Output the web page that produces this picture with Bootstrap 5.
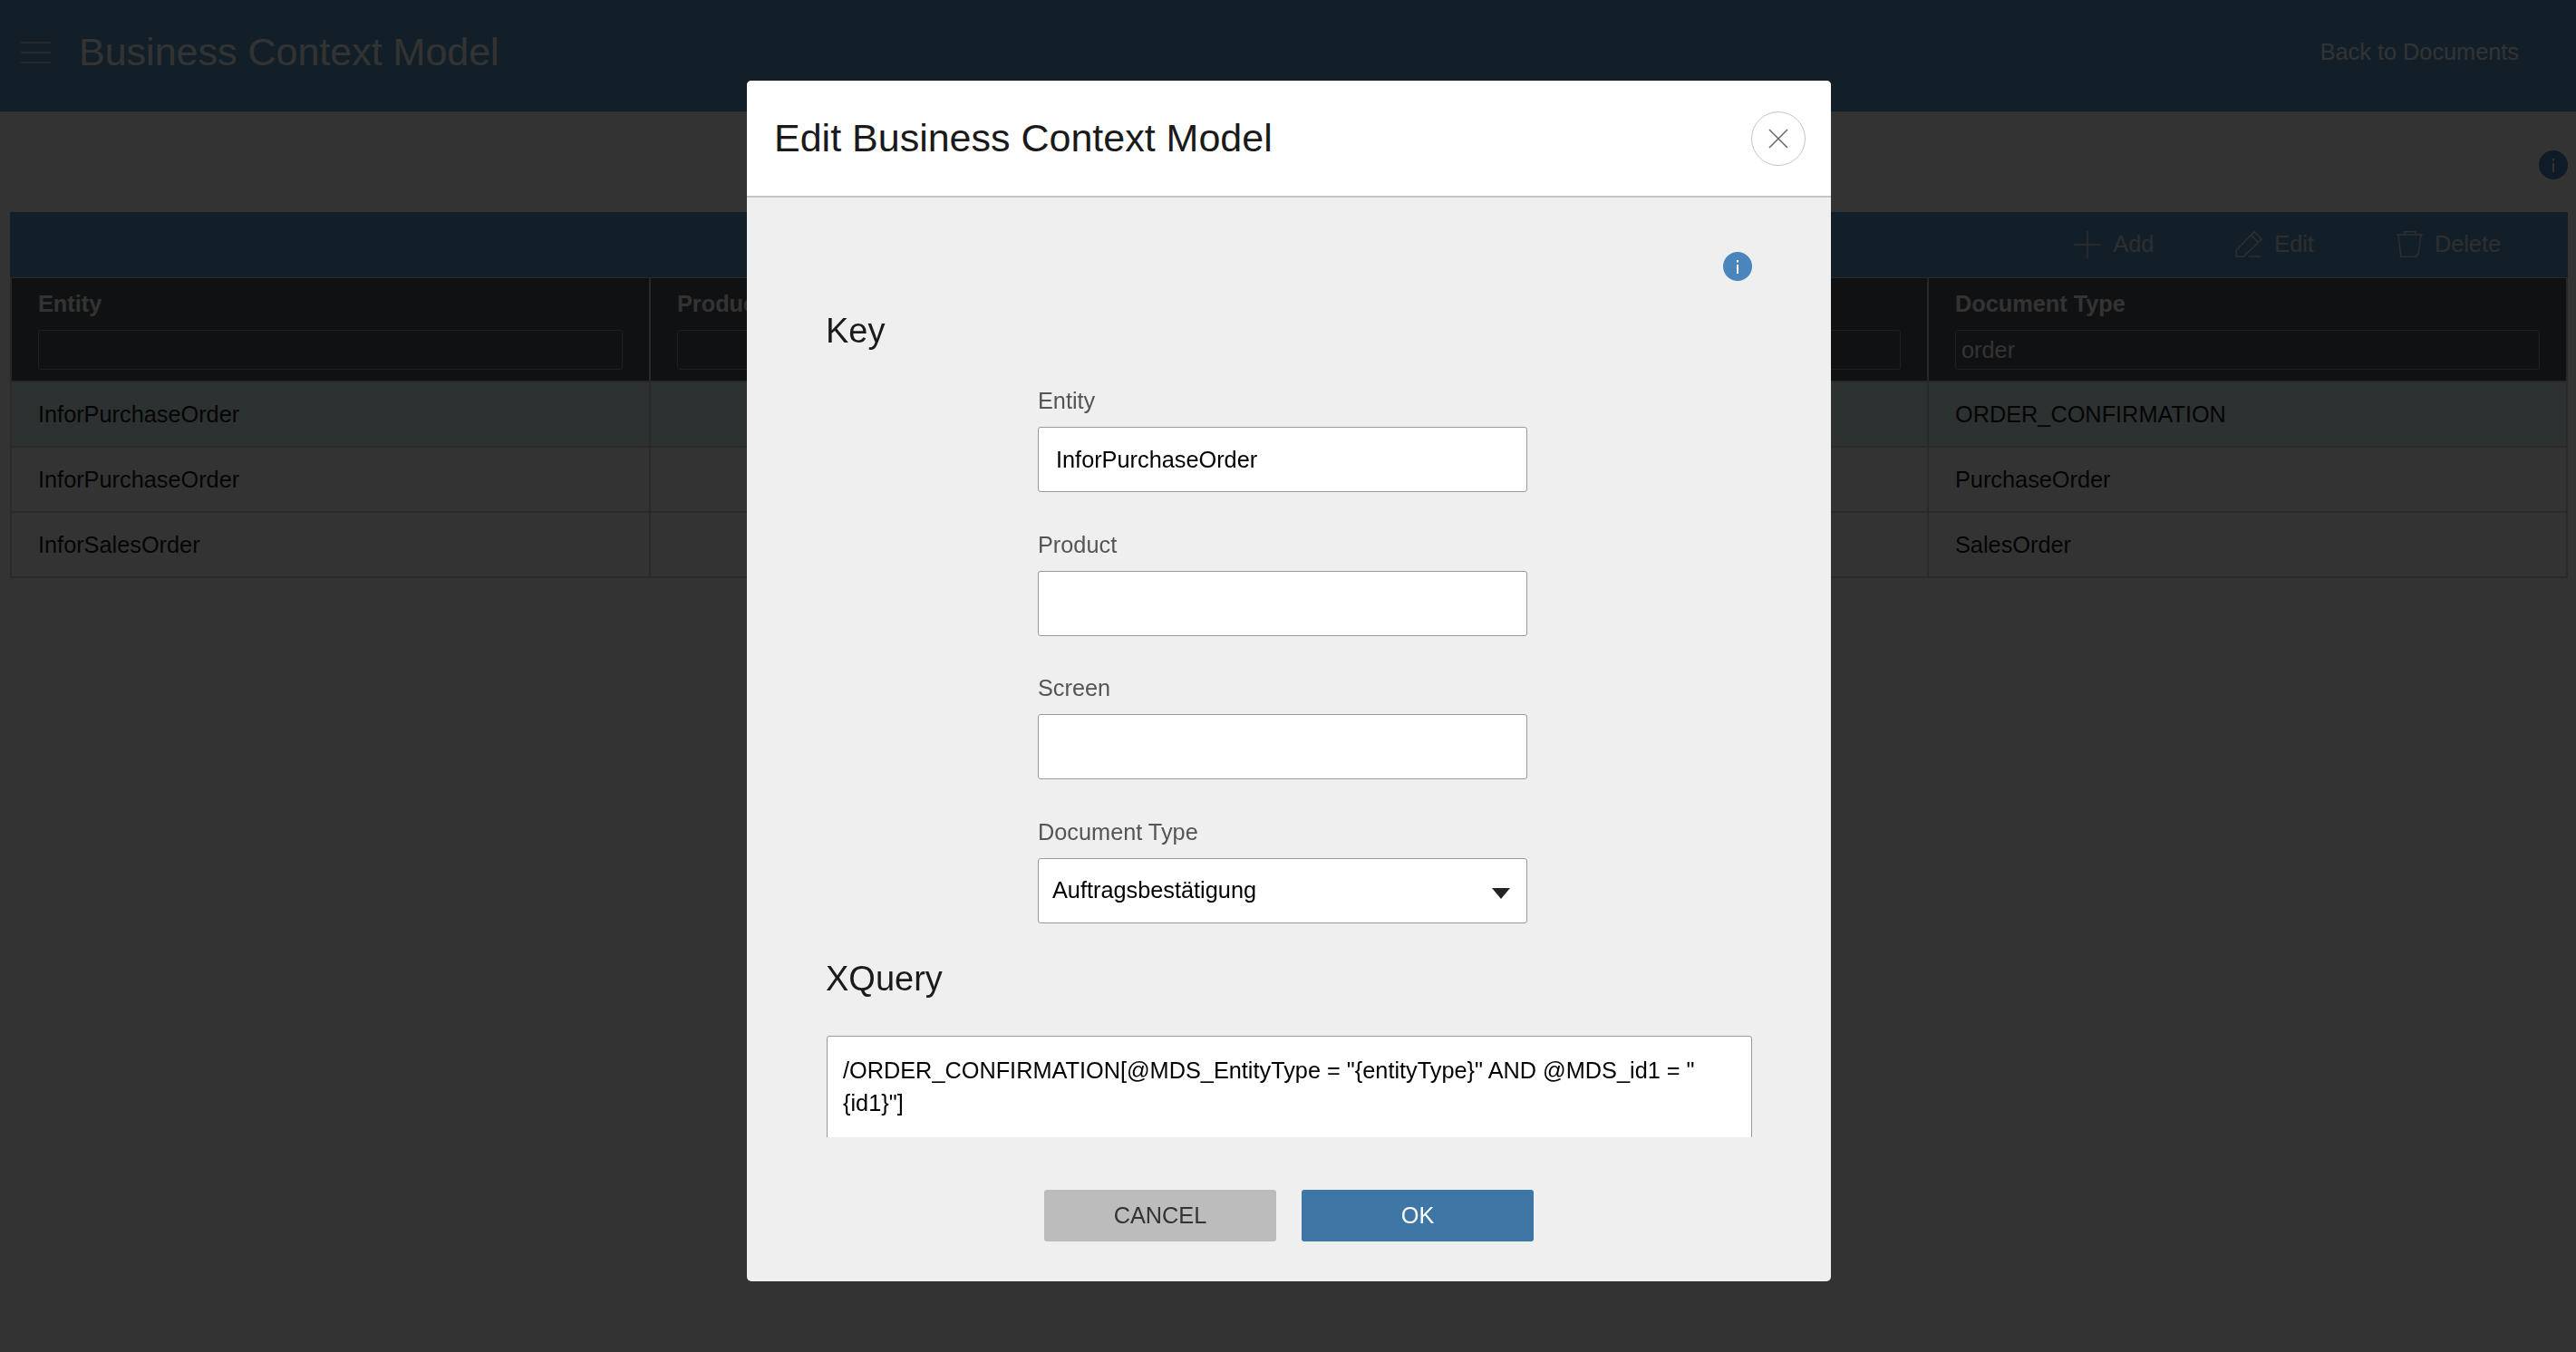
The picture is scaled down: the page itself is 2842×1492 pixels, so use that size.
<!DOCTYPE html>
<html lang="en">
<head>
<meta charset="UTF-8">
<title>Business Context Model</title>
<link href="https://cdn.jsdelivr.net/npm/bootstrap@5.3.0/dist/css/bootstrap.min.css" rel="stylesheet">
<style>
    html, body { height: 100%; }
    body {
        font-family: "Liberation Sans", Arial, sans-serif;
        font-size: 25.3px;
        background-color: #fff;
        color: #000;
        overflow: hidden;
    }
    .top-bar { height: 123px; background-color: #5a9bcd; color: #fff; padding: 0 63px 8px 23px; }
    .burger { width: 33px; height: 24px; margin-right: 31px; }
    .page-title { font-size: 43px; font-weight: 400; margin: 0; }
    .info-row { height: 111px; padding: 43px 9px 0 0; }
    .info-dot { width: 32px; height: 32px; display: block; }
    .grid-wrap { padding: 0 9px 0 11px; }
    .tool-bar { height: 72px; background-color: #5a9bcd; color: #fff; padding-right: 74px; }
    .tool-item { color: #e6e6e6; gap: 13px; margin-left: 90px; }
    .tool-item svg { width: 30px; height: 30px; }
    .data-grid { table-layout: fixed; width: 100%; margin: 0; border-collapse: collapse; --bs-table-bg: transparent; }
    .data-grid th, .data-grid td { border: 2px solid #d2d2d2; border-top-width: 1px; padding: 0 29px; font-size: 25.3px; }
    .data-grid th { background-color: #50545c; color: #fff; font-weight: 700; padding-top: 13px; padding-bottom: 12px; border-color: #c8c8c8; line-height: 30px; }
    .data-grid td { height: 72px; padding-top: 1px; vertical-align: middle; background-color: #fff; color: #1a1a1a; }
    .data-grid tr.row-picked td { background-color: #dcf5f5; }
    .filter-box {
        display: block; width: 100%; height: 44px; margin-top: 14px; padding: 0 6px;
        background: transparent; border: 1px solid #999; border-radius: 3px;
        color: #fff; font-size: 25.3px; font-weight: 400;
    }
    .modal-backdrop { --bs-backdrop-opacity: .8; --bs-backdrop-bg: #000; }
    .modal { --bs-modal-width: 1196px; }
    .modal-dialog { margin: 89px 0 0 824px; }
    .modal-content { height: 1325px; border: 0; border-radius: 5px; overflow: hidden; background-color: #efefef; }
    .modal-header { height: 129px; background-color: #fff; border-bottom: 2px solid #c4c4c4; padding: 0 28px 0 30px; border-radius: 0; }
    .modal-title { font-size: 43px; font-weight: 400; color: #1a1a1a; line-height: 1; }
    .close-round { width: 60px; height: 60px; padding: 0; background: #fff; border: 1.5px solid #c4c4c4; border-radius: 50%; display: flex; align-items: center; justify-content: center; }
    .close-round svg { width: 22px; height: 22px; }
    .modal-body { height: 1037px; flex: none; overflow: hidden; padding: 60px 87px 0 88px; }
    .section-title { font-size: 38px; font-weight: 400; line-height: 44px; color: #1a1a1a; margin: 0 0 0 -1px; }
    .key-title { margin-top: 33px; margin-bottom: 40px; }
    .query-title { margin-top: 39px; margin-bottom: 41px; }
    .field-block { width: 540px; margin-left: 233px; }
    .field-block + .field-block { margin-top: 42.67px; }
    .field-block .form-label { display: block; font-size: 25.3px; line-height: 30px; margin-bottom: 14px; color: #555; }
    .field-input {
        height: 72px; padding: 0 19px; font-size: 25.3px; color: #000;
        border: 1.5px solid #999; border-radius: 3px; background-image: none;
    }
    .field-input.form-select { padding: 0 15px; background-image: none; }
    .select-arrow {
        position: absolute; right: 19px; top: 33px; width: 0; height: 0;
        border-left: 10px solid transparent; border-right: 10px solid transparent; border-top: 12px solid #222;
    }
    .query-input {
        height: 180px; padding: 19px 17px; font-size: 25.3px; line-height: 36.5px; color: #000;
        border: 1.5px solid #999; border-radius: 3px; resize: none; overflow: hidden;
    }
    .modal-footer { border: 0; padding: 58px 0 44px; gap: 28px; justify-content: center; }
    .dlg-btn { width: 256px; height: 57px; margin: 0 !important; padding: 0; font-size: 25.3px; border: 0; border-radius: 3px; }
    .dlg-cancel { background-color: #bcbcbc; color: #333; }
    .dlg-ok { background-color: #3e76a5; color: #fff; }
</style>
</head>
<body>

<header class="top-bar d-flex align-items-center">
    <svg class="burger" viewBox="0 0 33 24"><path d="M0 1h33M0 12h33M0 23h33" stroke="#e6e6e6" stroke-width="1.5" fill="none"/></svg>
    <h1 class="page-title">Business Context Model</h1>
    <span class="ms-auto">Back to Documents</span>
</header>

<div class="info-row d-flex justify-content-end">
    <svg class="info-dot" viewBox="0 0 32 32"><circle cx="16" cy="16" r="16" fill="#4a86bd"/><rect x="15" y="14" width="2" height="10" fill="#fff"/><rect x="15" y="9" width="2" height="2.5" fill="#fff"/></svg>
</div>

<div class="grid-wrap">
    <div class="tool-bar d-flex align-items-center justify-content-end">
        <div class="tool-item d-flex align-items-center">
            <svg viewBox="0 0 30 30" fill="none" stroke="#e6e6e6" stroke-width="1.5"><path d="M0 15h30M15 0v30"/></svg>
            <span>Add</span>
        </div>
        <div class="tool-item d-flex align-items-center">
            <svg viewBox="0 0 30 30" fill="none" stroke="#e6e6e6" stroke-width="1.5"><path d="M1.3 28.3v-7.6L21.3.7l8 8.3L9 28.3zM17.3 4l8.400 9M14.700 28h14"/></svg>
            <span>Edit</span>
        </div>
        <div class="tool-item d-flex align-items-center">
            <svg viewBox="0 0 30 30" fill="none" stroke="#e6e6e6" stroke-width="1.5"><path d="M1 4h29M9.700 4V.7H22V4M3 4l2.700 24.300h14c3 0 5-1.500 5.500-4.300L28 4"/></svg>
            <span>Delete</span>
        </div>
    </div>

    <table class="table data-grid">
        <thead>
            <tr>
                <th>Entity<input class="filter-box" type="text"></th>
                <th>Product<input class="filter-box" type="text"></th>
                <th>Screen<input class="filter-box" type="text"></th>
                <th>Document Type<input class="filter-box" type="text" value="order"></th>
            </tr>
        </thead>
        <tbody>
            <tr class="row-picked"><td>InforPurchaseOrder</td><td></td><td></td><td>ORDER_CONFIRMATION</td></tr>
            <tr><td>InforPurchaseOrder</td><td></td><td></td><td>PurchaseOrder</td></tr>
            <tr><td>InforSalesOrder</td><td></td><td></td><td>SalesOrder</td></tr>
        </tbody>
    </table>
</div>

<div class="modal-backdrop show"></div>

<div class="modal d-block" tabindex="-1">
    <div class="modal-dialog">
        <div class="modal-content">
            <div class="modal-header">
                <h2 class="modal-title">Edit Business Context Model</h2>
                <button class="close-round" type="button" aria-label="Close">
                    <svg viewBox="0 0 22 22"><path d="M1 1l20 20M21 1L1 21" stroke="#666" stroke-width="1.500" fill="none"/></svg>
                </button>
            </div>
            <div class="modal-body">
                <div class="d-flex justify-content-end">
                    <svg class="info-dot" viewBox="0 0 32 32"><circle cx="16" cy="16" r="16" fill="#4a86bd"/><rect x="15" y="14" width="2" height="10" fill="#fff"/><rect x="15" y="9" width="2" height="2.5" fill="#fff"/></svg>
                </div>
                <h3 class="section-title key-title">Key</h3>
                <div class="field-block">
                    <label class="form-label">Entity</label>
                    <input class="form-control field-input" type="text" value="InforPurchaseOrder">
                </div>
                <div class="field-block">
                    <label class="form-label">Product</label>
                    <input class="form-control field-input" type="text">
                </div>
                <div class="field-block">
                    <label class="form-label">Screen</label>
                    <input class="form-control field-input" type="text">
                </div>
                <div class="field-block">
                    <label class="form-label">Document Type</label>
                    <div class="position-relative">
                        <select class="form-select field-input"><option>Auftragsbestätigung</option></select>
                        <span class="select-arrow"></span>
                    </div>
                </div>
                <h3 class="section-title query-title">XQuery</h3>
                <textarea class="form-control query-input">/ORDER_CONFIRMATION[@MDS_EntityType = "{entityType}" AND @MDS_id1 = "{id1}"]</textarea>
            </div>
            <div class="modal-footer">
                <button class="btn dlg-btn dlg-cancel" type="button">CANCEL</button>
                <button class="btn dlg-btn dlg-ok" type="button">OK</button>
            </div>
        </div>
    </div>
</div>

<script src="https://cdn.jsdelivr.net/npm/bootstrap@5.3.0/dist/js/bootstrap.bundle.min.js"></script>
</body>
</html>
